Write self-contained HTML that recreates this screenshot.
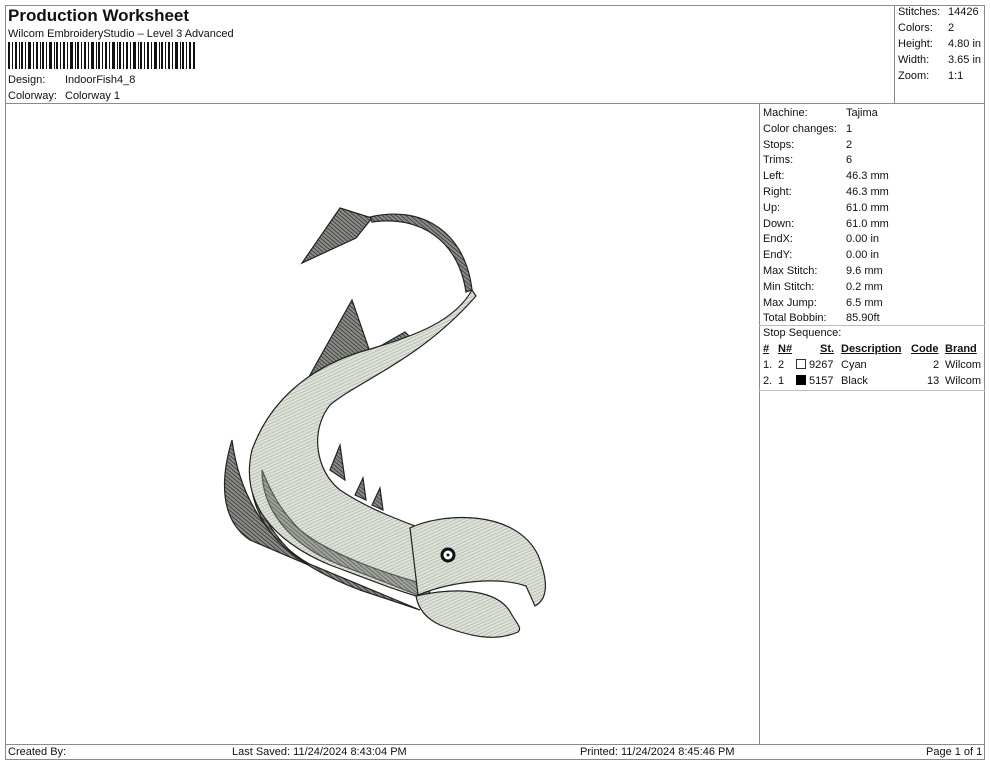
<!DOCTYPE html>
<html><head><meta charset="utf-8"><style>
*{margin:0;padding:0;box-sizing:border-box}
body{width:990px;height:762px;background:#fff;position:relative;overflow:hidden;font-family:"Liberation Sans",Arial,sans-serif;font-size:11px;color:#111}
.a{position:absolute;white-space:nowrap;line-height:12px}
.l{position:absolute;background:#8a8a8a}
u{text-decoration:underline}
</style></head><body>
<div class="l" style="left:5px;top:5px;width:980px;height:1px"></div>
<div class="l" style="left:5px;top:5px;width:1px;height:755px"></div>
<div class="l" style="left:984px;top:5px;width:1px;height:755px"></div>
<div class="l" style="left:5px;top:759px;width:980px;height:1px"></div>
<div class="l" style="left:5px;top:103px;width:980px;height:1px"></div>
<div class="l" style="left:894px;top:5px;width:1px;height:98px"></div>
<div class="l" style="left:759px;top:103px;width:1px;height:641px"></div>
<div class="l" style="left:759px;top:325px;width:226px;height:1px;background:#bbb"></div>
<div class="l" style="left:759px;top:390px;width:226px;height:1px;background:#bbb"></div>
<div class="l" style="left:5px;top:744px;width:980px;height:1px"></div>

<div class="a" style="left:8px;top:7px;font-size:17px;font-weight:bold;line-height:18px">Production Worksheet</div>
<div class="a" style="left:8px;top:28px">Wilcom EmbroideryStudio – Level 3 Advanced</div>
<svg style="position:absolute;left:8px;top:42px" width="188" height="27">
<g fill="#111">
<rect x="0" width="2" height="27"/><rect x="4" width="1" height="27"/><rect x="7" width="2" height="27"/><rect x="11" width="1" height="27"/><rect x="13" width="2" height="27"/><rect x="17" width="1" height="27"/><rect x="20" width="3" height="27"/><rect x="25" width="1" height="27"/><rect x="28" width="2" height="27"/><rect x="32" width="1" height="27"/><rect x="34" width="2" height="27"/><rect x="38" width="1" height="27"/><rect x="41" width="3" height="27"/><rect x="46" width="1" height="27"/><rect x="48" width="2" height="27"/><rect x="52" width="1" height="27"/><rect x="55" width="2" height="27"/><rect x="59" width="1" height="27"/><rect x="62" width="3" height="27"/><rect x="67" width="1" height="27"/><rect x="69" width="2" height="27"/><rect x="73" width="1" height="27"/><rect x="76" width="2" height="27"/><rect x="80" width="1" height="27"/><rect x="83" width="3" height="27"/><rect x="88" width="1" height="27"/><rect x="90" width="2" height="27"/><rect x="94" width="1" height="27"/><rect x="97" width="2" height="27"/><rect x="101" width="1" height="27"/><rect x="104" width="3" height="27"/><rect x="109" width="1" height="27"/><rect x="111" width="2" height="27"/><rect x="115" width="1" height="27"/><rect x="118" width="2" height="27"/><rect x="122" width="1" height="27"/><rect x="125" width="3" height="27"/><rect x="130" width="1" height="27"/><rect x="132" width="2" height="27"/><rect x="136" width="1" height="27"/><rect x="139" width="2" height="27"/><rect x="143" width="1" height="27"/><rect x="146" width="3" height="27"/><rect x="151" width="1" height="27"/><rect x="153" width="2" height="27"/><rect x="157" width="1" height="27"/><rect x="160" width="2" height="27"/><rect x="164" width="1" height="27"/><rect x="167" width="3" height="27"/><rect x="172" width="1" height="27"/><rect x="174" width="2" height="27"/><rect x="178" width="1" height="27"/><rect x="181" width="2" height="27"/><rect x="185" width="2" height="27"/>
</g></svg>
<div class="a" style="left:8px;top:74px">Design:</div><div class="a" style="left:65px;top:74px">IndoorFish4_8</div>
<div class="a" style="left:8px;top:90px">Colorway:</div><div class="a" style="left:65px;top:90px">Colorway 1</div>

<div class="a" style="left:898px;top:6px">Stitches:</div><div class="a" style="left:948px;top:6px">14426</div>
<div class="a" style="left:898px;top:22px">Colors:</div><div class="a" style="left:948px;top:22px">2</div>
<div class="a" style="left:898px;top:38px">Height:</div><div class="a" style="left:948px;top:38px">4.80 in</div>
<div class="a" style="left:898px;top:54px">Width:</div><div class="a" style="left:948px;top:54px">3.65 in</div>
<div class="a" style="left:898px;top:70px">Zoom:</div><div class="a" style="left:948px;top:70px">1:1</div>

<div style="position:absolute;left:763px;top:106px;line-height:15.8px">
Machine:<br>Color changes:<br>Stops:<br>Trims:<br>Left:<br>Right:<br>Up:<br>Down:<br>EndX:<br>EndY:<br>Max Stitch:<br>Min Stitch:<br>Max Jump:<br>Total Bobbin:</div>
<div style="position:absolute;left:846px;top:106px;line-height:15.8px">
Tajima<br>1<br>2<br>6<br>46.3 mm<br>46.3 mm<br>61.0 mm<br>61.0 mm<br>0.00 in<br>0.00 in<br>9.6 mm<br>0.2 mm<br>6.5 mm<br>85.90ft</div>
<div class="a" style="left:763px;top:327px">Stop Sequence:</div>
<div class="a" style="left:763px;top:343px;font-weight:bold"><u>#</u></div>
<div class="a" style="left:778px;top:343px;font-weight:bold"><u>N#</u></div>
<div class="a" style="left:820px;top:343px;font-weight:bold"><u>St.</u></div>
<div class="a" style="left:841px;top:343px;font-weight:bold"><u>Description</u></div>
<div class="a" style="left:911px;top:343px;font-weight:bold"><u>Code</u></div>
<div class="a" style="left:945px;top:343px;font-weight:bold"><u>Brand</u></div>
<div class="a" style="left:763px;top:359px">1.</div><div class="a" style="left:778px;top:359px">2</div>
<div style="position:absolute;left:796px;top:359px;width:10px;height:10px;border:1px solid #333"></div>
<div class="a" style="left:809px;top:359px">9267</div><div class="a" style="left:841px;top:359px">Cyan</div>
<div class="a" style="left:933px;top:359px">2</div><div class="a" style="left:945px;top:359px">Wilcom</div>
<div class="a" style="left:763px;top:375px">2.</div><div class="a" style="left:778px;top:375px">1</div>
<div style="position:absolute;left:796px;top:375px;width:10px;height:10px;background:#000"></div>
<div class="a" style="left:809px;top:375px">5157</div><div class="a" style="left:841px;top:375px">Black</div>
<div class="a" style="left:927px;top:375px">13</div><div class="a" style="left:945px;top:375px">Wilcom</div>

<div class="a" style="left:8px;top:746px">Created By:</div>
<div class="a" style="left:232px;top:746px">Last Saved: 11/24/2024 8:43:04 PM</div>
<div class="a" style="left:580px;top:746px">Printed: 11/24/2024 8:45:46 PM</div>
<div class="a" style="left:926px;top:746px">Page 1 of 1</div>

<svg style="position:absolute;left:0;top:0" width="760" height="744">
<defs>
<pattern id="lh" width="3" height="3" patternUnits="userSpaceOnUse" patternTransform="rotate(-25)"><rect width="3" height="3" fill="#dde2d8"/><line x1="0" y1="0" x2="3" y2="0" stroke="#8f968b" stroke-width="0.8"/></pattern>
<pattern id="dh" width="3" height="3" patternUnits="userSpaceOnUse" patternTransform="rotate(40)"><rect width="3" height="3" fill="#8a8a86"/><line x1="0" y1="0" x2="3" y2="0" stroke="#222" stroke-width="1.3"/></pattern>
</defs>
<g stroke="#222" stroke-width="1.2">
<path d="M302,263 L340,208 L372,218 L356,238 Z" fill="url(#dh)"/>
<path d="M370,217 C420,205 465,230 472,290 L466,292 C458,240 420,215 372,222 Z" fill="url(#dh)"/>
<path d="M296,400 L352,300 L370,352 L405,332 L418,345 L330,395 Z" fill="url(#dh)"/>
<path d="M232,440 C220,480 220,520 250,540 L320,570 C270,545 240,500 232,440 Z" fill="url(#dh)"/>
<path d="M250,470 C250,520 280,560 360,590 L420,610 L300,560 C265,530 255,500 250,470 Z" fill="url(#dh)"/>
<path d="M472,290 C455,320 420,335 360,352 C310,368 270,400 252,450 C240,500 270,540 330,565 C370,580 400,592 430,600 L425,530 C400,520 370,510 340,490 C315,470 310,430 330,405 C360,380 420,360 476,296 Z" fill="url(#lh)"/>
<path d="M262,470 C262,510 290,545 340,565 C380,580 405,590 430,600 L428,585 C390,575 330,555 300,530 C280,510 270,490 262,470 Z" fill="url(#dh)" opacity="0.7"/>
<path d="M330,470 L340,445 L345,480 Z M355,495 L363,478 L366,500 Z M372,505 L380,488 L383,510 Z" fill="url(#dh)"/>
<path d="M410,528 C440,513 515,508 538,555 C550,585 546,600 535,606 L526,586 C500,577 455,580 418,595 Z" fill="url(#lh)"/>
<path d="M416,596 C460,586 500,590 512,615 C518,625 522,628 518,632 C500,640 478,640 440,625 C425,618 418,608 416,596 Z" fill="url(#lh)"/>
</g>
<circle cx="448" cy="555" r="6" fill="#fff" stroke="#111" stroke-width="3"/>
<circle cx="448" cy="555" r="1.5" fill="#111"/>
</svg>
</body></html>
